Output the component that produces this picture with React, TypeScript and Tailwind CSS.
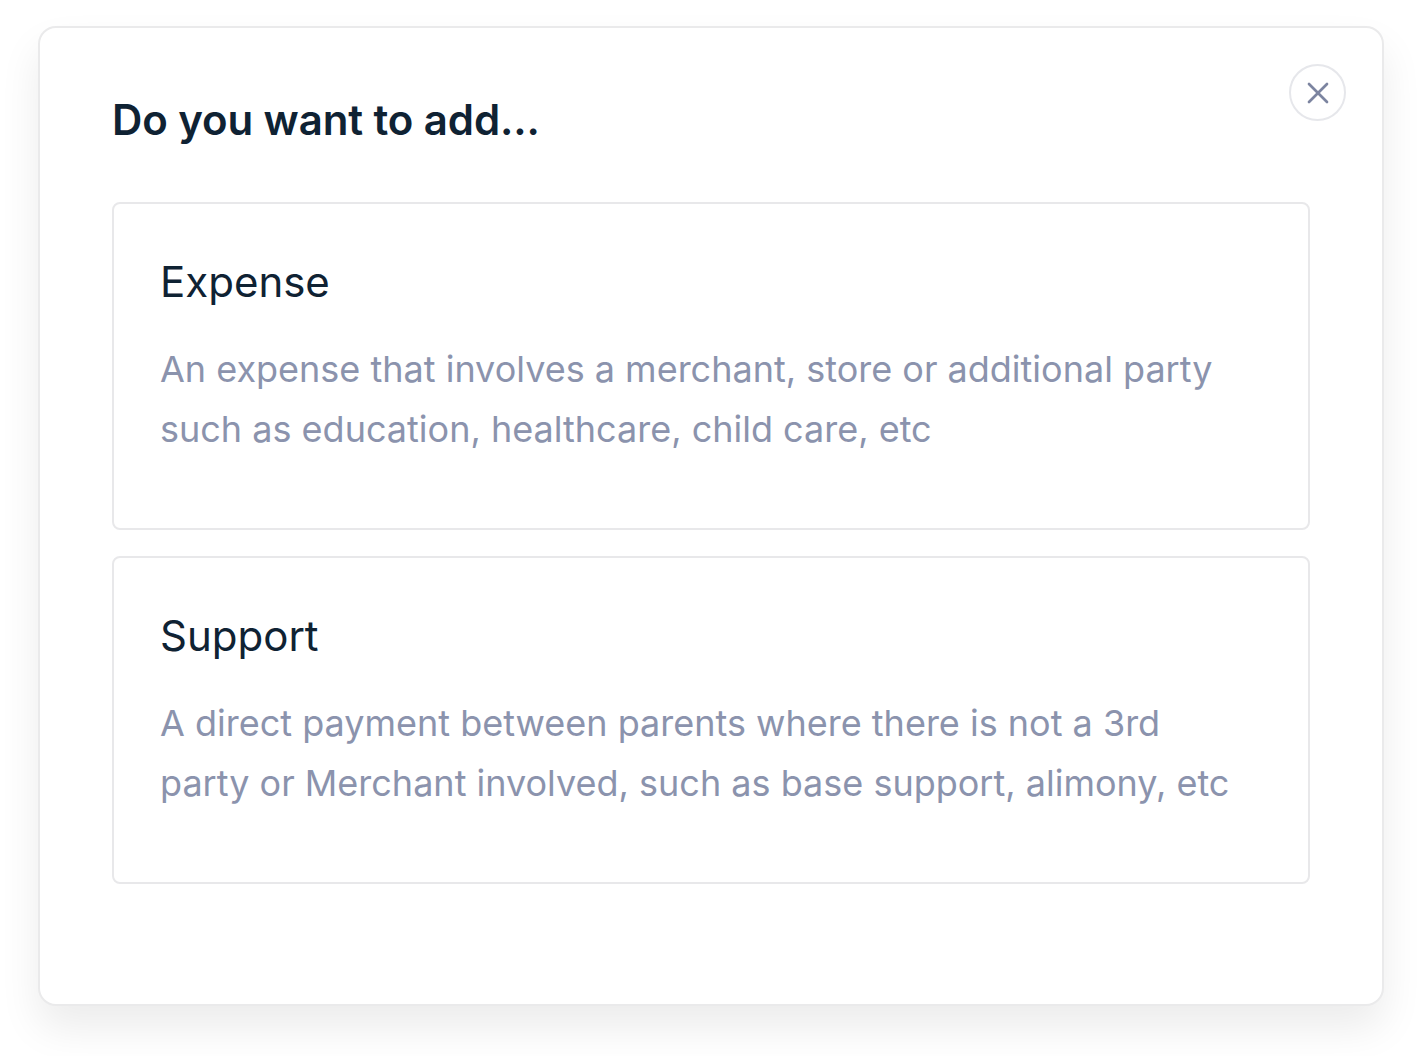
import { X } from "lucide-react";

const options = [
  {
    title: "Expense",
    description:
      "An expense that involves a merchant, store or additional party such as education, healthcare, child care, etc",
  },
  {
    title: "Support",
    description:
      "A direct payment between parents where there is not a 3rd party or Merchant involved, such as base support, alimony, etc",
  },
];

export default function App() {
  return (
    <div className="min-h-screen bg-white pl-[38px] pt-[26px] font-['Inter',sans-serif]">
      <div className="relative h-[980px] w-[1346px] rounded-[18px] border-2 border-[#eaeaeb] bg-white px-[72px] pt-[67px] shadow-[0_22px_40px_rgba(0,0,0,0.08)]">
        <button
          type="button"
          className="absolute right-[36px] top-[36px] flex h-[57px] w-[57px] items-center justify-center rounded-full border-2 border-[#e6e7eb] bg-white text-[#7c84a0]"
        >
          <X size={36} strokeWidth={1.8} />
        </button>

        <h1 className="text-[42px] font-semibold leading-[50px] tracking-[-0.1px] text-[#0f2233]">
          Do you want to add...
        </h1>

        <div className="mt-[57px] flex flex-col gap-[26px]">
          {options.map((opt) => (
            <div
              key={opt.title}
              className="rounded-[8px] border-2 border-[#e8e8ea] bg-white pb-[69px] pl-[46px] pr-[70px] pt-[53px]"
            >
              <h2 className="text-[42px] font-normal leading-[50px] text-[#0f2233]">
                {opt.title}
              </h2>
              <p className="mt-[32px] text-[36px] leading-[60px] text-[#8b93ad]">
                {opt.description}
              </p>
            </div>
          ))}
        </div>
      </div>
    </div>
  );
}
